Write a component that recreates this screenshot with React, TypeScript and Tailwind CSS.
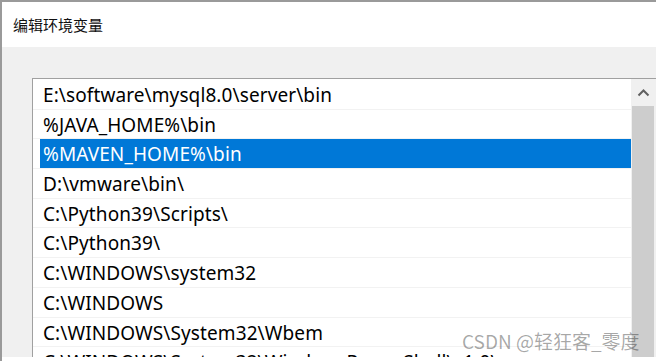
const PATHS = [
  'E:\\software\\mysql8.0\\server\\bin',
  '%JAVA_HOME%\\bin',
  '%MAVEN_HOME%\\bin',
  'D:\\vmware\\bin\\',
  'C:\\Python39\\Scripts\\',
  'C:\\Python39\\',
  'C:\\WINDOWS\\system32',
  'C:\\WINDOWS',
  'C:\\WINDOWS\\System32\\Wbem',
  'C:\\WINDOWS\\System32\\WindowsPowerShell\\v1.0\\',
];

const SELECTED = 2;

export default function App() {
  return (
    <div className="relative w-[656px] h-[361px] overflow-hidden bg-[#f0f0f0] border-t-2 border-l-2 border-[#9a9a9a] font-['Noto_Sans','Noto_Sans_CJK_SC',sans-serif]">
      {/* Title */}
      <div className="h-[45px] bg-white pl-[11px] pt-[11px]">
        <span className="text-[15px] leading-[20px] text-[#111] font-['Noto_Sans_CJK_SC',sans-serif]">
          编辑环境变量
        </span>
      </div>

      {/* Path list */}
      <div className="ml-[30px] mt-[31px] w-[700px] border-t border-l border-[#a0a0a0] bg-white flex">
        <div className="w-[598px] pt-[1px]">
          {PATHS.map((p, i) => (
            <div key={p} className="h-[29.7px] border-b border-[#f2f2f2] pl-[7px]">
              <div
                className={`h-full pl-[3px] text-[19px] leading-[31px] tracking-[0.1px] whitespace-nowrap ${
                  i === SELECTED ? 'bg-[#0078d7] text-white' : 'text-black'
                }`}
              >
                {p}
              </div>
            </div>
          ))}
        </div>

        {/* Scrollbar */}
        <div className="w-[25px] bg-[#f0f0f0] flex flex-col">
          <div className="h-[27px] flex items-center justify-center">
            <svg width="13" height="8" viewBox="0 0 13 8">
              <path d="M1.5 6.5 L6.5 1.5 L11.5 6.5" fill="none" stroke="#606060" strokeWidth="2" />
            </svg>
          </div>
          <div className="ml-[1px] w-[22px] h-[300px] bg-[#cdcdcd]" />
        </div>
      </div>

      {/* Bottom edge of the capture */}
      <div className="absolute left-0 right-0 bottom-0 h-[4px] bg-white" />

      {/* Watermark */}
      <div className="absolute left-[460px] top-[326px] text-[19px] leading-[26px] text-black/35 whitespace-nowrap font-['Noto_Sans_CJK_SC',sans-serif]">
        CSDN @轻狂客_零度
      </div>
    </div>
  );
}
